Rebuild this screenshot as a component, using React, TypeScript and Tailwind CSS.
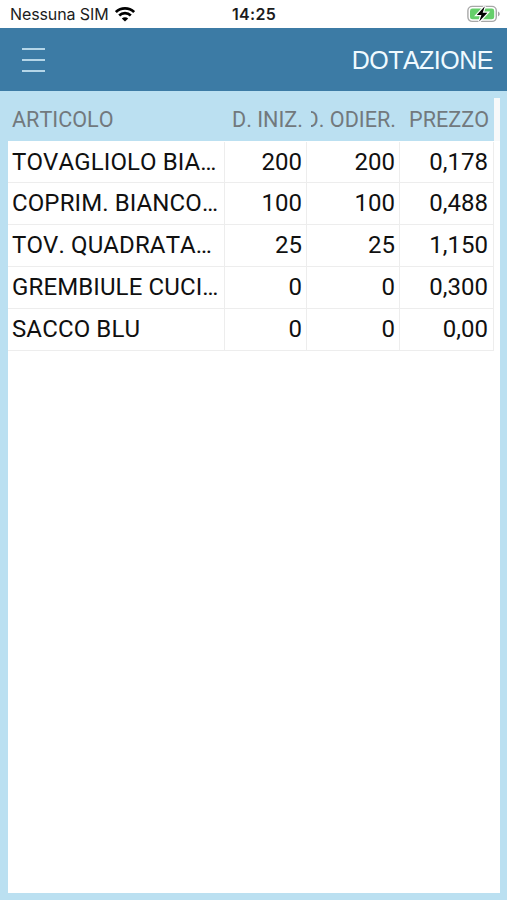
import React from 'react';

interface Article {
  name: string;
  initial: string;
  current: string;
  price: string;
}

const ARTICLES: Article[] = [
  { name: 'TOVAGLIOLO BIA…', initial: '200', current: '200', price: '0,178' },
  { name: 'COPRIM. BIANCO…', initial: '100', current: '100', price: '0,488' },
  { name: 'TOV. QUADRATA…', initial: '25', current: '25', price: '1,150' },
  { name: 'GREMBIULE CUCI…', initial: '0', current: '0', price: '0,300' },
  { name: 'SACCO BLU', initial: '0', current: '0', price: '0,00' },
];

const WifiIcon = () => (
  <svg width="20" height="15" viewBox="0 0 20 15" fill="none" stroke="#000" strokeWidth="2.7">
    <path d="M0.9 5.1C6 0.2 14 0.2 19.1 5.1" />
    <path d="M4.2 8.5C7.4 5.4 12.6 5.4 15.8 8.5" />
    <path d="M10 14.6L6.8 11.4C8.6 9.7 11.4 9.7 13.2 11.4Z" fill="#000" stroke="none" />
  </svg>
);

const BatteryIcon = () => (
  <svg width="34" height="18" viewBox="0 0 34 18">
    <rect x="0.9" y="1.4" width="28.4" height="15" rx="4.3" fill="#fff" stroke="#a8a8a8" strokeWidth="1.4" />
    <rect x="3" y="3.5" width="24.2" height="10.8" rx="2.4" fill="#65cf6a" />
    <path d="M31 6.5C33.3 7.2 33.3 10.6 31 11.3Z" fill="#a8a8a8" />
    <path d="M17.8 1.2L9.8 10H14.4L12.2 16.6L20.4 7.8H15.7Z" fill="#000" stroke="#fff" strokeWidth="2.4" paintOrder="stroke" />
  </svg>
);

const StatusBar = () => (
  <div className="h-7 shrink-0 grid grid-cols-3 items-center bg-white pl-[8px] pr-[6px] font-[Inter,sans-serif] text-[#1c1c1c]">
    <div className="flex items-center gap-[6px] pl-[2px] whitespace-nowrap">
      <span className="text-[16px] leading-7 tracking-[-0.1px]">Nessuna SIM</span>
      <WifiIcon />
    </div>
    <span className="text-center text-[16px] leading-7 font-semibold tracking-[0.3px] pr-[1px]">14:25</span>
    <div className="flex justify-end">
      <BatteryIcon />
    </div>
  </div>
);

const Header = () => (
  <header className="h-[63px] shrink-0 flex items-center justify-between bg-[#3c7ba5] pl-[22px] pr-[14px]">
    <button className="flex flex-col gap-[9px]" aria-label="Menu">
      <span className="block h-[2px] w-[23px] bg-[#b5d6e8]" />
      <span className="block h-[2px] w-[23px] bg-[#b5d6e8]" />
      <span className="block h-[2px] w-[23px] bg-[#b5d6e8]" />
    </button>
    <h1 className="font-['Liberation_Sans',sans-serif] text-[25px] leading-none tracking-[-0.5px] pt-[2px] text-[#f0faff]">DOTAZIONE</h1>
  </header>
);

export default function App() {
  return (
    <div className="w-full h-[900px] flex flex-col overflow-hidden bg-[#bbe0f1] font-[Roboto,sans-serif] [font-kerning:none]">
      <StatusBar />
      <Header />
      <main className="flex-1 flex flex-col pl-2 pr-[7px] pb-[7px]">
        {/* Column titles */}
        <div className="h-[50px] shrink-0 flex text-[21.6px] leading-[48px] text-[#72797d] whitespace-nowrap pt-[5px]">
          <div className="w-[217px] pl-1">ARTICOLO</div>
          <div className="w-[82px] flex justify-end overflow-hidden pr-[4px]">D. INIZ.</div>
          <div className="w-[86px] ml-[4px] flex justify-end overflow-hidden pr-[1px]">D. ODIER.</div>
          <div className="w-[97px] flex justify-end overflow-hidden pr-[5px]">PREZZO</div>
          <div className="ml-auto mt-[2px] h-[43px] w-[6px] bg-[#f7f9fa]" />
        </div>
        <div className="flex-1 bg-white pt-[0.6px]">
          {ARTICLES.map(article => (
            <div key={article.name} className="h-[41.8px] w-[486px] flex text-[24px] leading-[41px] text-[#101010] whitespace-nowrap border-b border-[#ededed]">
              <div className="w-[217px] pl-1 tracking-[0.12px] border-r border-[#ededed]">{article.name}</div>
              <div className="w-[82px] pr-[4px] text-right border-r border-[#ededed]">{article.initial}</div>
              <div className="w-[93px] pr-[4px] text-right border-r border-[#ededed]">{article.current}</div>
              <div className="w-[94px] pr-[5px] text-right border-r border-[#ededed]">{article.price}</div>
            </div>
          ))}
        </div>
      </main>
    </div>
  );
}
